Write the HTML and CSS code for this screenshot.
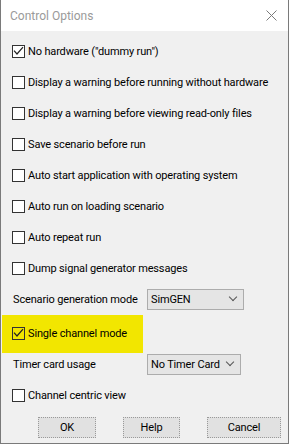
FILE: index.html
```html
<!DOCTYPE html>
<html lang="en">
<head>
  <meta charset="UTF-8" />
  <title>Control Options</title>
  <link rel="stylesheet" href="styles.css">
</head>
<body>
  <div class="window">
    <div class="titlebar">
      <span class="title">Control Options</span>
      <svg class="close" width="11" height="11" viewBox="0 0 11 11">
        <path d="M0.5 0.5 L10.5 10.5 M10.5 0.5 L0.5 10.5" stroke="#7a7a7a" stroke-width="1" fill="none"/>
      </svg>
    </div>
    <div class="content">
      <label class="row">
        <span class="box"><svg class="tick" width="11" height="11" viewBox="0 0 11 11"><path d="M1 4.6 L4 8 L10 1.2" stroke="#222" stroke-width="1.2" fill="none"/></svg></span>No hardware ("dummy run")
      </label>
      <label class="row"><span class="box"></span>Display a warning before running without hardware</label>
      <label class="row"><span class="box"></span>Display a warning before viewing read-only files</label>
      <label class="row"><span class="box"></span>Save scenario before run</label>
      <label class="row"><span class="box"></span>Auto start application with operating system</label>
      <label class="row"><span class="box"></span>Auto run on loading scenario</label>
      <label class="row"><span class="box"></span>Auto repeat run</label>
      <label class="row"><span class="box"></span>Dump signal generator messages</label>

      <div class="combo-row first">
        <span class="combo-label">Scenario generation mode</span>
        <div class="select wide">SimGEN<span class="chev"></span></div>
      </div>

      <label class="row highlight">
        <span class="box"><svg class="tick" width="11" height="11" viewBox="0 0 11 11"><path d="M1 4.6 L4 8 L10 1.2" stroke="#222" stroke-width="1.2" fill="none"/></svg></span>Single channel mode
      </label>

      <div class="combo-row">
        <span class="combo-label">Timer card usage</span>
        <div class="select narrow">No Timer Card<span class="chev"></span></div>
      </div>

      <label class="row last"><span class="box"></span>Channel centric view</label>

      <div class="buttons">
        <button class="btn ok">OK</button>
        <button class="btn help">Help</button>
        <button class="btn cancel">Cancel</button>
      </div>
    </div>
  </div>
</body>
</html>
```

FILE: styles.css
```css
body {
  margin: 0;
  font-family: Roboto, "Liberation Sans", sans-serif;
  font-size: 11px;
  letter-spacing: -0.15px;
  color: #000;
  white-space: nowrap;
}
.window {
  width: 289px;
  height: 444px;
  box-sizing: border-box;
  border: 1px solid #7a7a7a;
  border-top: none;
  background: #f0f0f0;
}
.titlebar {
  height: 31px;
  background: #fff;
  display: flex;
  align-items: center;
  justify-content: space-between;
  padding: 0 10px 0 9px;
}
.title {
  color: #9a9a9a;
  font-size: 12px;
  letter-spacing: 0;
}
.close {
  display: block;
  margin-right: 1px;
}
.content {
  display: flex;
  flex-direction: column;
  padding: 5px 0 0 11px;
}
.row {
  height: 31px;
  display: flex;
  align-items: center;
}
.box {
  width: 13px;
  height: 13px;
  box-sizing: border-box;
  border: 1px solid #333;
  background: #fff;
  margin-right: 3px;
  flex: none;
}
.tick {
  display: block;
}
.highlight .box {
  background: transparent;
}
.combo-row {
  display: flex;
  align-items: center;
  height: 22px;
  padding-left: 1px;
}
.combo-row.first {
  height: 30px;
}
.combo-label {
  width: 134px;
}
.select {
  height: 21px;
  box-sizing: border-box;
  border: 1px solid #acacac;
  background: #e5e5e5;
  display: flex;
  align-items: center;
  justify-content: space-between;
  padding: 0 7px 0 3px;
}
.select.wide { width: 97px; }
.select.narrow { width: 94px; }
.chev {
  width: 5px;
  height: 5px;
  border: solid #555;
  border-width: 0 1px 1px 0;
  transform: rotate(45deg);
  margin-top: -4px;
}
.highlight {
  background: #f2e600;
  margin-left: -10px;
  padding-left: 10px;
  width: 141px;
  height: 38px;
  margin-top: 1px;
  padding-bottom: 2px;
  box-sizing: border-box;
}
.row.last {
  height: 40px;
}
.buttons {
  display: flex;
  margin-top: 2px;
  padding-left: 26px;
}
.btn {
  font-family: inherit;
  font-size: 11px;
  letter-spacing: -0.15px;
  height: 21px;
  box-sizing: border-box;
  border: 1px dotted #9a9a9a;
  background: #e1e1e1;
  padding: 0;
  margin-right: 27px;
}
.btn.ok { width: 58px; }
.btn.help { width: 57px; }
.btn.cancel { width: 74px; margin-right: 0; }
```
